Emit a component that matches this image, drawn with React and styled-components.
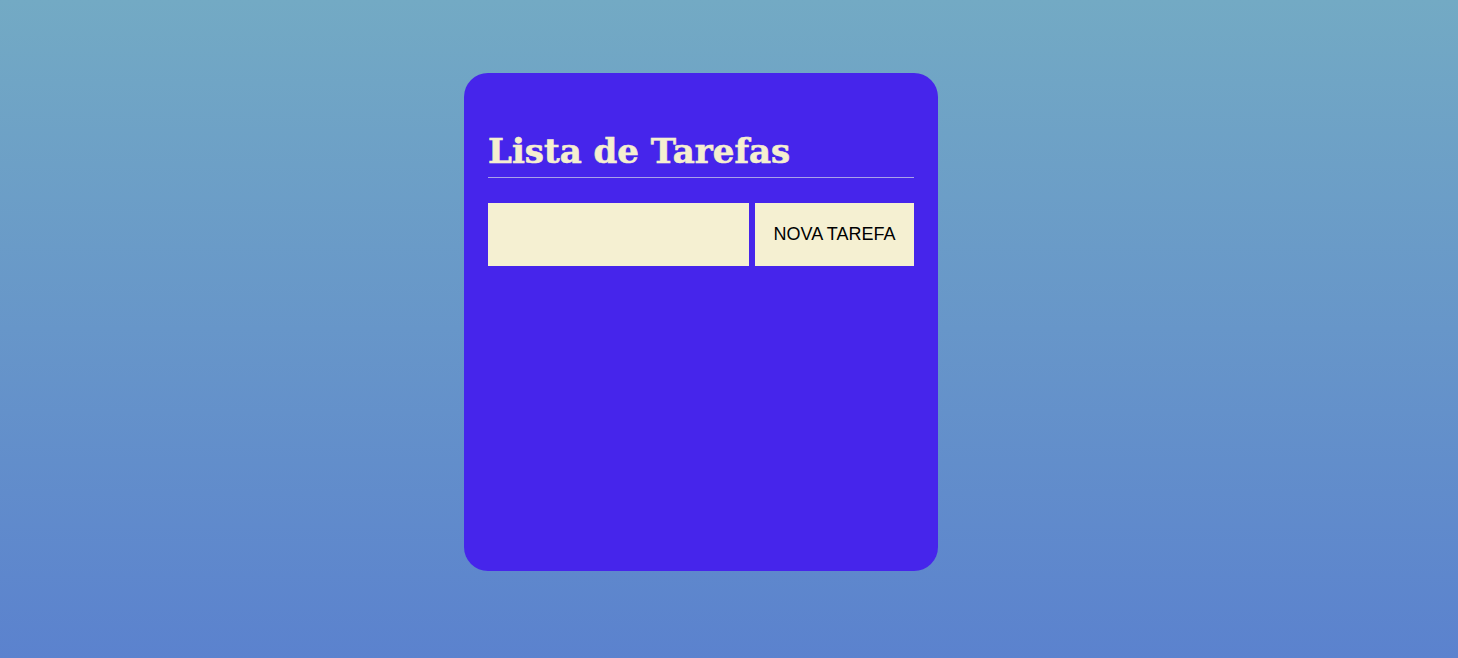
import React from "react";
import styled, { createGlobalStyle } from "styled-components";

const Global = createGlobalStyle`
  html, body { margin: 0; padding: 0; }
  body {
    min-height: 658px;
    background: linear-gradient(to bottom, #73aac4, #5b82ce);
    font-family: "Liberation Sans", Arial, sans-serif;
  }
`;

const Page = styled.div`
  min-height: 658px;
  display: flex;
  justify-content: center;
  align-items: flex-start;
  padding: 73px 56px 0 0;
  box-sizing: border-box;
`;

const Card = styled.div`
  width: 474px;
  height: 498px;
  box-sizing: border-box;
  background: #4625eb;
  border-radius: 24px;
  padding: 56px 24px 24px;
`;

const Title = styled.h1`
  margin: 0;
  font-family: "DejaVu Serif", serif;
  font-weight: bold;
  font-size: 34px;
  line-height: 44px;
  color: #f5efd0;
  letter-spacing: 0;
  padding-bottom: 4px;
  border-bottom: 1px solid #aaa2e8;
  -webkit-text-stroke: 0.6px #f5efd0;
`;

const Row = styled.div`
  display: flex;
  gap: 6px;
  margin-top: 25px;
  height: 63px;
`;

const Input = styled.input`
  flex: 1;
  border: none;
  outline: none;
  background: #f5f0d2;
  padding: 0 12px;
  font-family: "Liberation Sans", Arial, sans-serif;
  font-size: 16px;
`;

const Button = styled.button`
  width: 159px;
  border: none;
  background: #f5f0d2;
  color: #000;
  font-family: "Liberation Sans", Arial, sans-serif;
  font-size: 18px;
  cursor: pointer;
  padding: 0;
`;

export default function App() {
  return (
    <>
      <Global />
      <Page>
        <Card>
          <Title>Lista de Tarefas</Title>
          <Row>
            <Input type="text" />
            <Button>NOVA TAREFA</Button>
          </Row>
        </Card>
      </Page>
    </>
  );
}
